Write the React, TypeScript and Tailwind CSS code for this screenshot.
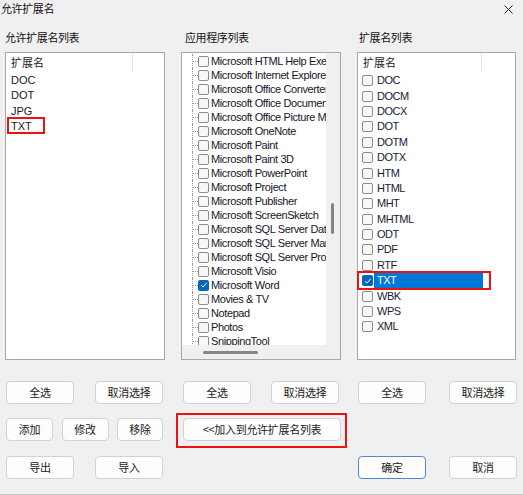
import React from 'react';

const cjk = "font-['Noto_Sans_CJK_SC',sans-serif]";
const latin = "font-['Liberation_Sans','Noto_Sans_CJK_SC',sans-serif]";

const allowed = ['DOC', 'DOT', 'JPG', 'TXT'];

const apps = [
  'Microsoft HTML Help Executable',
  'Microsoft Internet Explorer',
  'Microsoft Office Converter',
  'Microsoft Office Document Imaging',
  'Microsoft Office Picture Manager',
  'Microsoft OneNote',
  'Microsoft Paint',
  'Microsoft Paint 3D',
  'Microsoft PowerPoint',
  'Microsoft Project',
  'Microsoft Publisher',
  'Microsoft ScreenSketch',
  'Microsoft SQL Server Data Tools',
  'Microsoft SQL Server Management Studio',
  'Microsoft SQL Server Profiler',
  'Microsoft Visio',
  'Microsoft Word',
  'Movies & TV',
  'Notepad',
  'Photos',
  'SnippingTool',
];

const exts = ['DOC', 'DOCM', 'DOCX', 'DOT', 'DOTM', 'DOTX', 'HTM', 'HTML', 'MHT', 'MHTML', 'ODT', 'PDF', 'RTF', 'TXT', 'WBK', 'WPS', 'XML'];

const Check = ({ checked }: { checked?: boolean }) =>
  checked ? (
    <div className="w-[11px] h-[11px] shrink-0 rounded-[2px] bg-[#0067c0] flex items-center justify-center">
      <svg width="8" height="8" viewBox="0 0 8 8" fill="none">
        <path d="M1.2 4.2 L3.1 6 L6.8 1.8" stroke="white" strokeWidth="1" />
      </svg>
    </div>
  ) : (
    <div className="w-[11px] h-[11px] shrink-0 rounded-[2px] border border-[#8c8c8c] bg-[#f7f7f7]" />
  );

const Btn = ({ label, w = 'w-[68px]', primary }: { label: string; w?: string; primary?: boolean }) => (
  <button
    className={`${w} h-[23px] rounded-[4px] bg-[#fdfdfd] border ${
      primary ? 'border-[#4a8ad0]' : 'border-[#d2d2d2]'
    } text-[11px] tracking-[-0.3px] text-[#1b1b1b] ${cjk} flex items-center justify-center`}
  >
    {label}
  </button>
);

const ListHeader = ({ colW }: { colW: string }) => (
  <div className="flex h-[20px] pb-[2px] shrink-0">
    <div className={`${colW} h-full border-r border-[#e4e4e4] pl-[5px] flex items-center text-[11px] leading-[14px] text-[#222] ${cjk}`}>
      扩展名
    </div>
  </div>
);

export default function App() {
  return (
    <div className="w-[523px] h-[495px] bg-[#f0f0f0] border-b border-[#c4c4c4] overflow-hidden select-none">
      {/* title bar */}
      <div className="h-[17px] flex items-center justify-between pl-[1px] pr-[10px]">
        <span className={`text-[11px] tracking-[-0.4px] text-[#111] ${cjk}`}>允许扩展名</span>
        <svg width="9" height="9" viewBox="0 0 9 9" className="mt-[1px]">
          <path d="M0.5 0.5 L8.5 8.5 M8.5 0.5 L0.5 8.5" stroke="#222" strokeWidth="1" />
        </svg>
      </div>

      <div className="px-[5px]">
        {/* labels */}
        <div className={`grid grid-cols-[160px_160px_160px] gap-x-4 mt-[12px] h-[16px] text-[11px] tracking-[-0.4px] text-[#111] ${cjk}`}>
          <div className="flex items-center">允许扩展名列表</div>
          <div className="flex items-center pl-[4px]">应用程序列表</div>
          <div className="flex items-center pl-[2px]">扩展名列表</div>
        </div>

        {/* lists */}
        <div className="grid grid-cols-[160px_160px_160px] gap-x-4 mt-[7px] h-[308px]">
          {/* allowed list */}
          <div className="border border-[#a6a6ae] bg-white flex flex-col">
            <ListHeader colW="w-[127px]" />
            {allowed.map((e) => (
              <div key={e} className={`h-[15.3px] relative flex items-center pl-[5px] text-[11px] leading-[13px] text-[#1a1a1a] ${latin}`}>
                {e}
                {e === 'TXT' && <div className="absolute left-[1px] top-[-2px] w-[38px] h-[17px] border-2 border-[#ee1111]" />}
              </div>
            ))}
          </div>

          {/* app tree */}
          <div className="border border-[#a6a6ae] bg-[#f0f0f0] flex flex-col">
            <div className="flex h-[292px]">
              <div className="w-[144px] h-full bg-white overflow-hidden pt-[1px]">
                {apps.map((a) => (
                  <div key={a} className="h-[14px] flex items-center">
                    <div className="w-[16px] h-full relative shrink-0">
                      <div className="absolute left-[10px] top-0 bottom-0 border-l border-dotted border-[#9a9a9a]" />
                      <div className="absolute left-[11px] w-[5px] top-[7px] border-t border-dotted border-[#9a9a9a]" />
                    </div>
                    <Check checked={a === 'Microsoft Word'} />
                    <span className={`ml-[2px] whitespace-nowrap text-[11px] leading-[13px] tracking-[-0.4px] text-[#15152a] ${latin}`}>{a}</span>
                  </div>
                ))}
              </div>
              <div className="flex-1 relative">
                <div className="absolute left-[5px] top-[150px] w-[3px] h-[31px] rounded-full bg-[#858585]" />
              </div>
            </div>
            <div className="flex-1 relative">
              <div className="absolute left-[21px] top-[6px] w-[55px] h-[3px] rounded-full bg-[#858585]" />
            </div>
          </div>

          {/* ext list */}
          <div className="border border-[#a6a6ae] bg-white flex flex-col w-[159px]">
            <ListHeader colW="w-[124px]" />
            {exts.map((e) => {
              const sel = e === 'TXT';
              return (
                <div key={e} className="h-[15.4px] relative flex items-center pl-[4px]">
                  <Check checked={sel} />
                  <span
                    className={`ml-[1px] w-[109px] h-full flex items-center pl-[3px] text-[11px] leading-[13px] tracking-[-0.5px] ${latin} ${
                      sel ? 'bg-[#0078d7] text-white' : 'text-[#1a1a33]'
                    }`}
                  >
                    {e}
                  </span>
                  {sel && <div className="absolute left-[-1px] top-[-2px] w-[134px] h-[19px] border-2 border-[#ee1111]" />}
                </div>
              );
            })}
          </div>
        </div>

        {/* button row 1 */}
        <div className="grid grid-cols-[160px_160px_160px] gap-x-4 mt-[21px]">
          <div className="flex justify-between pl-[1px] pr-[2px]">
            <Btn label="全选" />
            <Btn label="取消选择" />
          </div>
          <div className="flex justify-between pl-[2px] pr-[2px]">
            <Btn label="全选" />
            <Btn label="取消选择" />
          </div>
          <div className="flex justify-between pl-[1px] pr-[0px]">
            <Btn label="全选" />
            <Btn label="取消选择" />
          </div>
        </div>

        {/* button row 2 */}
        <div className="grid grid-cols-[160px_160px_160px] gap-x-4 mt-[14px]">
          <div className="flex justify-between pl-[1px] pr-[2px]">
            <Btn label="添加" w="w-[47px]" />
            <Btn label="修改" w="w-[47px]" />
            <Btn label="移除" w="w-[46px]" />
          </div>
          <div className="pl-[2px]">
            <div className="relative w-[158px]">
              <Btn label="<<加入到允许扩展名列表" w="w-[158px]" />
              <div className="absolute left-[-7px] right-[-6px] top-[-5px] bottom-[-7px] border-2 border-[#ee1111]" />
            </div>
          </div>
          <div />
        </div>

        {/* button row 3 */}
        <div className="grid grid-cols-[160px_160px_160px] gap-x-4 mt-[15px]">
          <div className="flex justify-between pl-[1px] pr-[2px]">
            <Btn label="导出" />
            <Btn label="导入" />
          </div>
          <div />
          <div className="flex justify-between pl-[1px]">
            <Btn label="确定" primary />
            <Btn label="取消" />
          </div>
        </div>
      </div>
    </div>
  );
}
